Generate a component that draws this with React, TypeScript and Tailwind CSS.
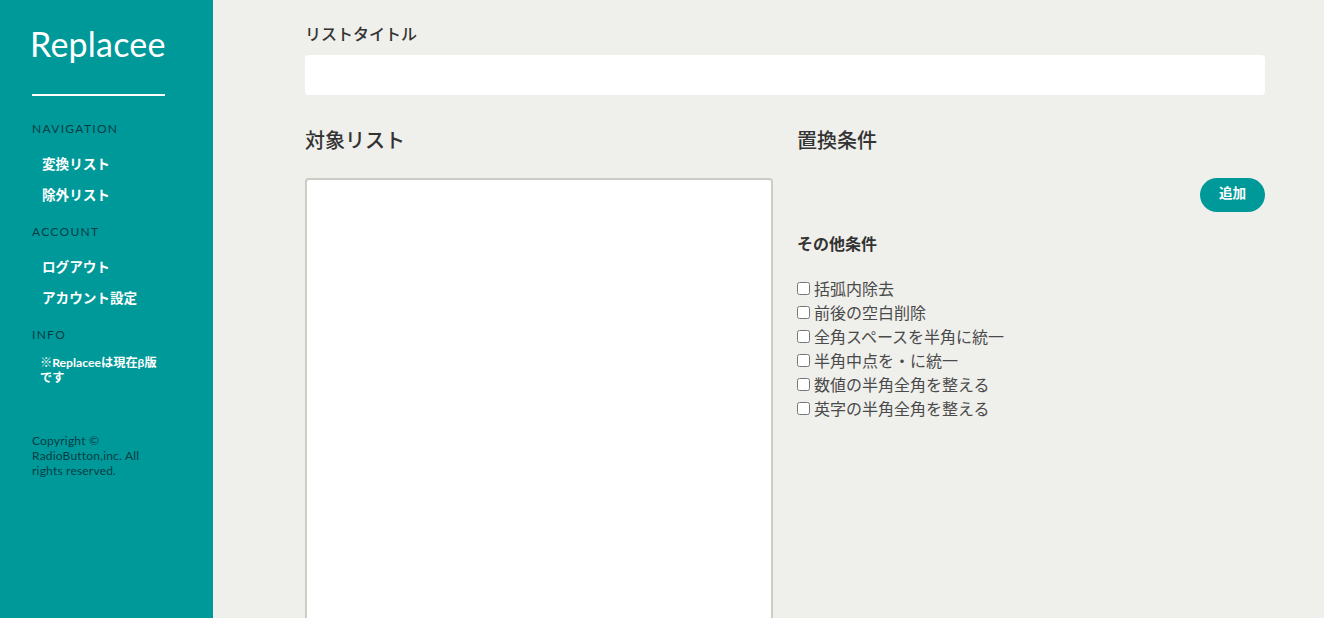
const jp = '"Noto Sans CJK JP", sans-serif';
const opts = ['括弧内除去', '前後の空白削除', '全角スペースを半角に統一', '半角中点を・に統一', '数値の半角全角を整える', '英字の半角全角を整える'];

function Label({ children }: { children: string }) {
  return <p className="text-[12px] leading-[18px] tracking-[1.3px] text-[#063c46] font-['Lato',sans-serif]">{children}</p>;
}

function Item({ children }: { children: string }) {
  return <a className="block pl-[10px] text-[13.6px] font-bold leading-[21px] text-white">{children}</a>;
}

export default function App() {
  return (
    <div className="flex h-[618px] w-[1324px] overflow-hidden bg-[#efefeb] text-[#333333]" style={{ fontFamily: jp }}>
      <aside className="w-[213px] shrink-0 bg-[#009999] pl-[32px] pr-[48px] pt-[22px]">
        <h1 className="-ml-[2px] text-[34px] leading-[44px] tracking-[0.2px] whitespace-nowrap text-white font-['Lato',sans-serif] font-normal">Replacee</h1>
        <div className="mt-[28px] h-[2px] w-[133px] bg-white" />
        <div className="mt-[24px]"><Label>NAVIGATION</Label></div>
        <div className="mt-[15px] flex flex-col gap-[10px]">
          <Item>変換リスト</Item>
          <Item>除外リスト</Item>
        </div>
        <div className="mt-[18px]"><Label>ACCOUNT</Label></div>
        <div className="mt-[15px] flex flex-col gap-[10px]">
          <Item>ログアウト</Item>
          <Item>アカウント設定</Item>
        </div>
        <div className="mt-[18px]"><Label>INFO</Label></div>
        <p className="mt-[11px] pl-[8px] text-[12.2px] font-bold leading-[15px] text-white font-['Lato','Noto_Sans_CJK_JP',sans-serif]">※Replaceeは現在β版です</p>
        <p className="mt-[48px] text-[12px] leading-[15px] tracking-[0.2px] text-[#063c46] font-['Lato',sans-serif]">Copyright © RadioButton,inc. All rights reserved.</p>
      </aside>
      <main className="min-w-0 flex-1 pl-[92px] pr-[59px] pt-[21px]">
        <label className="block text-[16px] font-medium leading-[24px]">リストタイトル</label>
        <input className="mt-[10px] block h-[40px] w-full rounded-[4px] bg-white outline-none" />
        <div className="mt-[31px] grid grid-cols-2 gap-[24px]">
          <section>
            <h2 className="text-[20px] font-medium leading-[28px]">対象リスト</h2>
            <textarea className="mt-[24px] block h-[500px] w-full resize-none rounded-[4px] border-2 border-[#cccbc5] bg-white outline-none" />
          </section>
          <section>
            <h2 className="text-[20px] font-medium leading-[28px]">置換条件</h2>
            <div className="mt-[24px] flex justify-end">
              <button className="h-[34px] w-[65px] rounded-full bg-[#009999] pb-[5px] text-[13.6px] font-bold text-white">追加</button>
            </div>
            <h3 className="mt-[19px] text-[16px] font-bold leading-[24px]">その他条件</h3>
            <div className="mt-[21px] flex flex-col">
              {opts.map((o) => (
                <label key={o} className="flex h-[24px] items-center text-[16px] text-[#4a4a4a]">
                  <input type="checkbox" className="ml-0 mr-[4px] h-[13px] w-[13px]" />
                  {o}
                </label>
              ))}
            </div>
          </section>
        </div>
      </main>
    </div>
  );
}
